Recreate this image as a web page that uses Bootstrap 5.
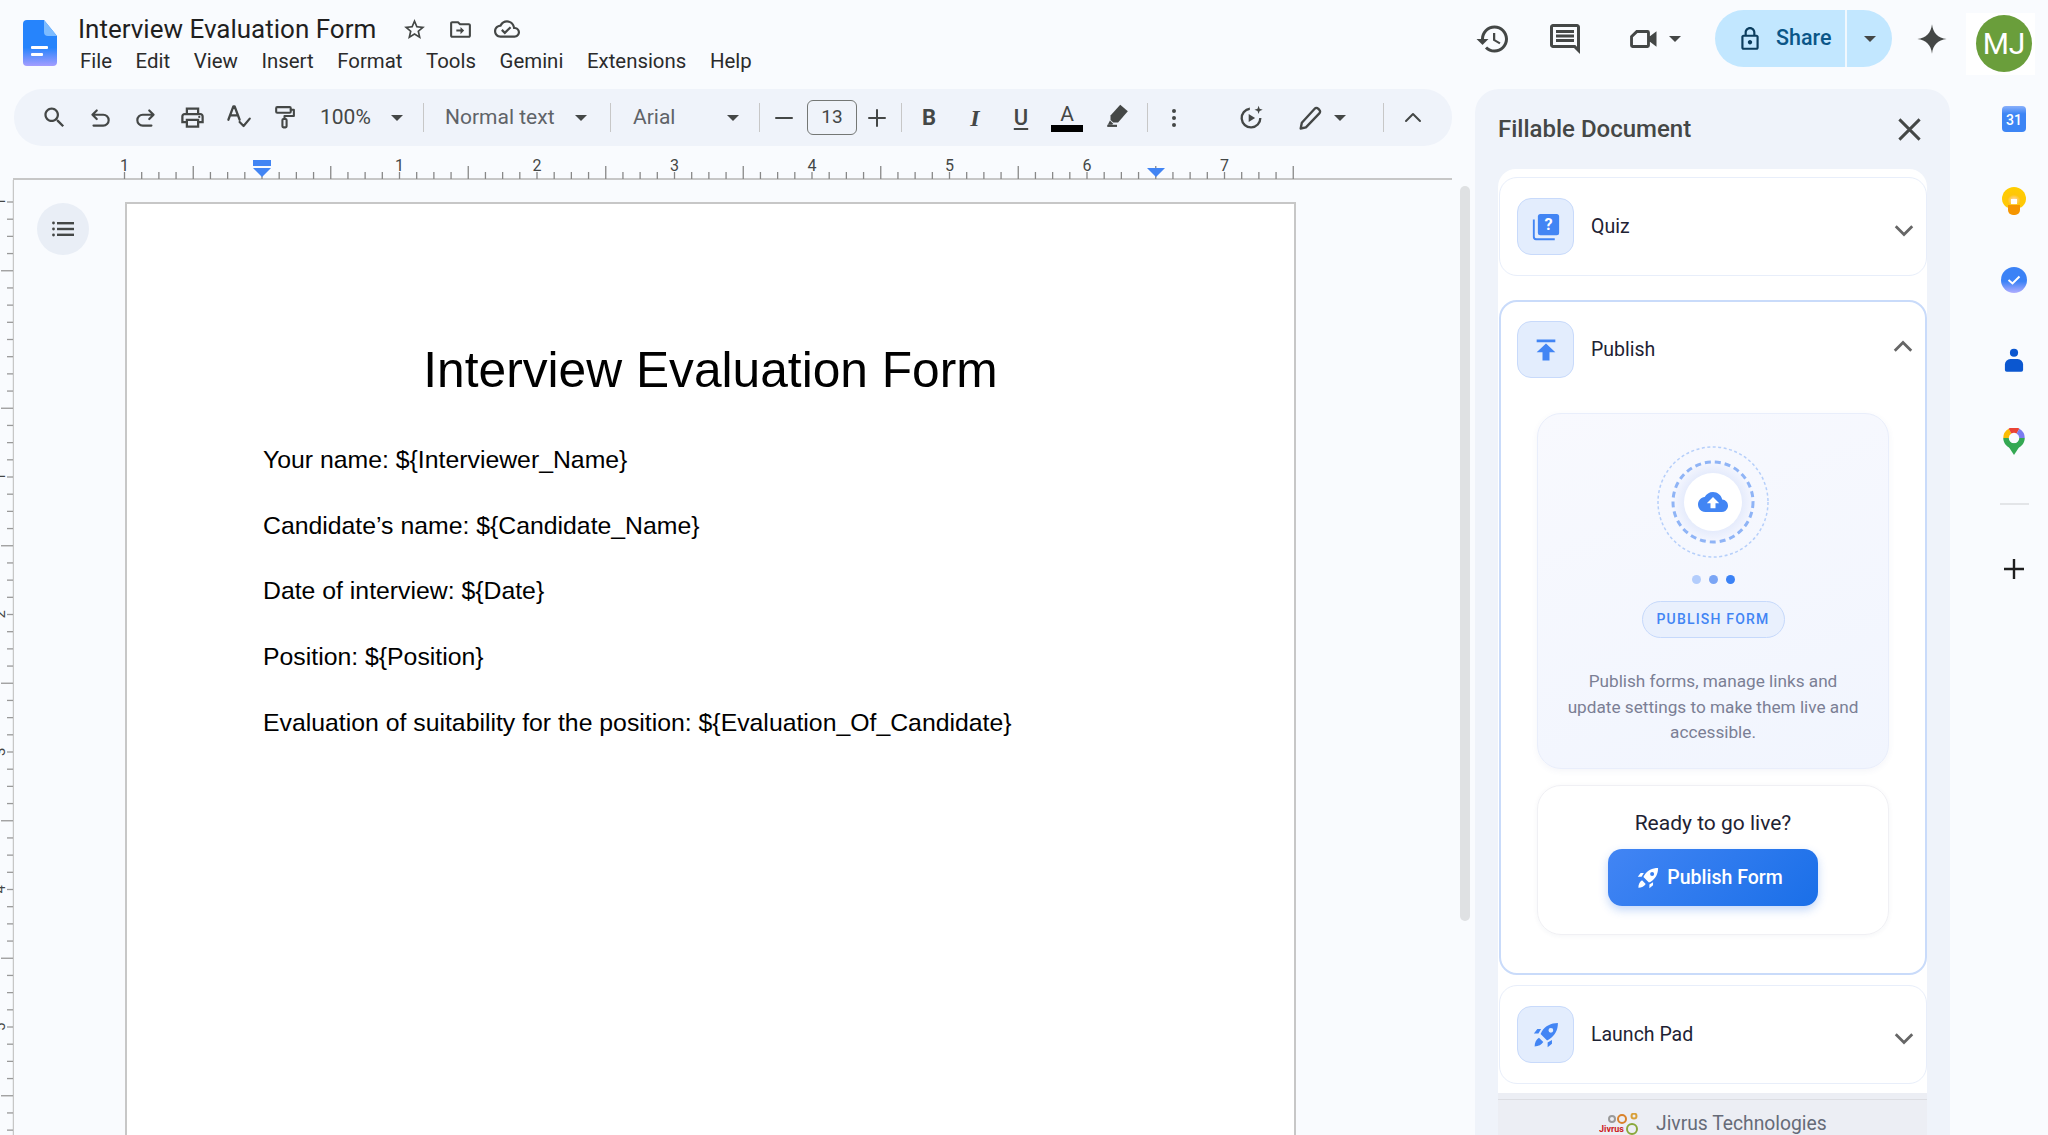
<!DOCTYPE html>
<html lang="en">
<head>
<meta charset="UTF-8">
<title>Interview Evaluation Form</title>
<link href="https://cdn.jsdelivr.net/npm/bootstrap@5.3.0/dist/css/bootstrap.min.css" rel="stylesheet">
<style>
    html, body { height: 100%; }
    body { background: #f9fbfe; overflow: hidden; font-family: Roboto, "Liberation Sans", sans-serif; color: #1f1f1f; }
    svg { display: block; flex: none; }
    .ic { fill: #444746; }
    .ics { fill: none; stroke: #444746; stroke-width: 2; stroke-linecap: round; stroke-linejoin: round; }

    /* header */
    .top-bar { height: 89px; flex: none; }
    .doc-logo { margin: 20px 21px 0 23px; }
    .title-row { margin-top: 14px; }
    .doc-title { font-size: 26px; line-height: 30px; }
    .title-icons { gap: 21px; margin-left: 26px; }
    .menu-row { gap: 23.6px; font-size: 20.4px; line-height: 26px; color: #2b2b2b; margin-left: 2px; margin-top: 4px; }
    .top-actions { margin-left: auto; padding-top: 10px; }
    .act-icon { width: 72px; height: 57px; }
    .act-video { width: 88px; padding-left: 24px; gap: 8px; }
    .share-group { height: 57px; width: 177px; margin-left: 26px; margin-right: 3px; background: #c2e7ff; border-radius: 29px; color: #0b5688; }
    .share-main { width: 132px; border-right: 2px solid #f1f8fe; gap: 13px; padding-left: 22px; font-size: 21.5px; font-weight: 500; }
    .share-caret { width: 45px; }
    .gem-wrap { width: 74px; height: 57px; margin-right: -3px; }
    .avatar-box { width: 69px; height: 62px; margin-top: 3px; margin-right: 13px; background: #fff; }
    .avatar { width: 56px; height: 57px; background: #6a9e3b; color: #fff; font-size: 30px; margin-top: 2px; margin-left: 10px; }

    /* toolbar */
    .left-col { width: 1475px; flex: none; }
    .tool-bar { margin-left: 14px; width: 1438px; height: 57px; flex: none; background: #eff3fa; border-radius: 28px; padding-left: 17px; color: #444746; font-size: 21px; }
    .tl { width: 46px; height: 100%; }
    .tsep { width: 1px; height: 29px; background: #c7c7c7; flex: none; }
    .caret-t { width: 0; height: 0; border-left: 6px solid transparent; border-right: 6px solid transparent; border-top: 6px solid #444746; }
    .sel-zoom { width: 111px; padding: 0 15px 0 13px; margin-right: 5px; color: #444746; }
    .sel-style { width: 186px; padding: 0 23px 0 21px; color: #5f6368; }
    .sel-font { width: 148px; padding: 0 20px 0 22px; color: #5f6368; }
    .t-minus { width: 47px; }
    .size-box { width: 50px; height: 35px; flex: none; border: 1.5px solid #747775; border-radius: 6px; font-size: 19px; }
    .t-plus { width: 40px; margin-right: 4px; }
    .t-b { margin-left: 4px; font-weight: 700; font-size: 22px; }
    .t-i { font-family: "Liberation Serif", serif; font-style: italic; font-weight: 700; font-size: 24px; }
    .t-u { font-size: 22px; font-weight: 500; text-decoration: underline; text-underline-offset: 3px; }
    .t-a { flex-direction: column; font-size: 21px; line-height: 22px; }
    .color-bar { width: 32px; height: 7px; background: #000; }
    .t-hl { margin-left: 4px; margin-right: 7px; padding-bottom: 6px; }
    .t-dots { width: 52px; }
    .t-play { margin-left: 28px; }
    .t-pen { margin-left: 13px; }
    .t-caret { width: 14px; margin-right: 36px; }
    .t-up { width: 58px; }

    /* rulers and page */
    .h-ruler { height: 34px; flex: none; }
    .work-area { min-height: 0; }
    .outline-col { width: 111px; flex: none; }
    .outline-btn { width: 52px; height: 52px; margin: 23px 0 0 23px; background: #e9eef6; }
    .doc-page { width: 1171px; flex: none; margin-top: 22px; background: #fff; border: 2px solid #c7c7c7; border-bottom: 0; padding: 0 135px; font-family: "Liberation Sans", Arial, sans-serif; color: #000; }
    .doc-head { font-size: 49.7px; font-weight: 400; text-align: center; line-height: 60px; margin: 136px 0 45px; }
    .doc-line { font-size: 24.8px; line-height: 30px; margin: 0 0 35.7px 1px; white-space: nowrap; }
    .fake-scroll { width: 10px; height: 735px; margin: 6px 0 0 164px; background: #dfe1e3; border-radius: 5px; flex: none; }

    /* side panel */
    .side-panel { width: 475px; flex: none; background: #eff3fa; border-radius: 24px 24px 0 0; padding: 0 23px; }
    .panel-title { height: 80px; padding-right: 4px; color: #444746; font-size: 24px; font-weight: 500; }
    .panel-list { background: #fff; border-radius: 18px 18px 0 0; padding: 8px 0 9px 1px; }
    .fd-card { border: 1px solid #e8eefa; border-radius: 18px; box-shadow: none; }
    .fd-card.open { border: 2px solid #c9dbfa; margin-top: 24px; margin-bottom: 10px; }
    .fd-head { padding: 20px 18px 20px 17px; gap: 17px; font-size: 19.5px; font-weight: 400; color: #1e2233; }
    .open .fd-head { padding: 19px 18px 0 16px; }
    .fd-icon { width: 57px; height: 57px; background: #e3edfd; border: 1.5px solid #c8dafb; border-radius: 14px; }
    .chev-dn { margin-left: auto; margin-top: 7px; margin-right: -7px; }
    .chev-up { margin-left: auto; margin-top: -5px; margin-right: -7px; }
    .promo-box { width: 352px; height: 356px; margin: 35px 0 0 36px; padding-top: 32px; background: linear-gradient(160deg, #f8f9fe, #f1f5fe); border: 1px solid #e9eefb; border-radius: 24px; box-shadow: 0 2px 6px rgba(70, 90, 160, .06); }
    .step-dots { gap: 8px; margin-top: 17px; }
    .step-dots span { width: 9px; height: 9px; }
    .dot-a { background: #b3cdfc; }
    .dot-b { background: #7aa5f5; }
    .dot-c { background: #3b82f6; }
    .pill-form { width: 143px; height: 37px; margin-top: 17px; background: #e9f0fd; border: 1.5px solid #c6d9fb; color: #4285f4; font-size: 14px; font-weight: 500; letter-spacing: 1.2px; }
    .promo-text { font-size: 17.2px; line-height: 25.5px; color: #7b7f95; margin: 31px 0 0; white-space: nowrap; }
    .ready-box { width: 352px; height: 150px; margin: 16px 0 38px 36px; padding-top: 23px; border: 1px solid #f0f0f4; border-radius: 24px; box-shadow: 0 1px 5px rgba(40, 50, 90, .05); }
    .ready-text { font-size: 21px; line-height: 28px; color: #1e2233; }
    .pub-btn { width: 210px; height: 57px; margin-top: 12px; gap: 8px; padding: 0 6px 0 0; border: 0; border-radius: 14px; background: linear-gradient(135deg, #4285f4, #1a6fe8); color: #fff; font-size: 19.5px; font-weight: 500; box-shadow: 0 4px 10px rgba(40, 110, 230, .28); }
    .brand-foot { flex: 1; background: #eceef4; padding-top: 6px; overflow: hidden; }
    .brand-line { height: 1px; background: #dcdde2; }
    .brand-row { gap: 17px; margin-top: 12px; font-size: 19.3px; line-height: 24px; color: #666b78; margin-left: 101px; }
    .jiv-logo { margin-top: 1px; }

    /* right rail */
    .right-rail { flex: 1; padding: 17px 0 0 30px; }
    .rail-slot { height: 80.5px; }
    .rail-line { width: 29px; height: 2px; background: #e3e5e8; margin-top: -6px; }
    .rail-add { margin-top: 52px; }
</style>
</head>
<body class="d-flex flex-column">

<!-- Header -->
<header class="top-bar d-flex">
    <svg class="doc-logo" width="34" height="46" viewBox="0 0 34 46">
        <defs><linearGradient id="docGrad" x1="0" y1="0" x2="0" y2="1"><stop offset=".6" stop-color="#2684fc"/><stop offset="1" stop-color="#a49dff"/></linearGradient></defs>
        <path d="M4 0H21L34 16V42a4 4 0 0 1-4 4H4a4 4 0 0 1-4-4V4a4 4 0 0 1 4-4z" fill="url(#docGrad)"/>
        <path d="M21 0L34 16H25a4 4 0 0 1-4-4z" fill="#7dbcff"/>
        <rect x="8" y="26" width="17" height="3" rx="1" fill="#fff"/>
        <rect x="8" y="33" width="12" height="3" rx="1" fill="#fff"/>
    </svg>
    <div>
        <div class="title-row d-flex align-items-center">
            <div class="doc-title">Interview Evaluation Form</div>
            <div class="title-icons d-flex align-items-center">
                <svg class="ic" width="25" height="25" viewBox="0 0 24 24"><path d="M22 9.24l-7.19-.62L12 2 9.19 8.63 2 9.24l5.46 4.73L5.82 21 12 17.27 18.18 21l-1.63-7.03L22 9.24zM12 15.4l-3.76 2.27 1-4.28-3.32-2.88 4.38-.38L12 6.1l1.71 4.04 4.38.38-3.32 2.88 1 4.28L12 15.4z"/></svg>
                <svg class="ic" width="25" height="25" viewBox="0 0 24 24"><path d="M20 6h-8l-2-2H4c-1.1 0-2 .9-2 2v12c0 1.1.9 2 2 2h16c1.1 0 2-.9 2-2V8c0-1.1-.9-2-2-2zm0 12H4V6h5.17l2 2H20v10z"/><path d="M12 9.5l3.5 3.5-3.5 3.5V14H8v-2h4z"/></svg>
                <svg class="ic" width="26" height="26" viewBox="0 0 24 24"><path d="M19.35 10.04C18.67 6.59 15.64 4 12 4 9.11 4 6.6 5.64 5.35 8.04 2.34 8.36 0 10.91 0 14c0 3.31 2.69 6 6 6h13c2.76 0 5-2.24 5-5 0-2.64-2.05-4.78-4.65-4.96zM19 18H6c-2.21 0-4-1.79-4-4 0-2.05 1.53-3.76 3.56-3.97l1.07-.11.5-.95C8.08 7.14 9.94 6 12 6c2.62 0 4.88 1.86 5.39 4.43l.3 1.5 1.53.11c1.56.1 2.78 1.41 2.78 2.96 0 1.65-1.35 3-3 3zm-9-3.82l-2.09-2.09L6.5 13.5 10 17l6.01-6.01-1.41-1.41z"/></svg>
            </div>
        </div>
        <div class="menu-row d-flex">
            <span>File</span><span>Edit</span><span>View</span><span>Insert</span><span>Format</span><span>Tools</span><span>Gemini</span><span>Extensions</span><span>Help</span>
        </div>
    </div>
    <div class="top-actions d-flex">
        <div class="act-icon d-flex align-items-center justify-content-center">
            <svg class="ic" width="36" height="36" viewBox="0 0 24 24"><path d="M13 3c-4.97 0-9 4.03-9 9H1l3.89 3.89.07.14L9 12H6c0-3.87 3.13-7 7-7s7 3.13 7 7-3.13 7-7 7c-1.93 0-3.68-.79-4.94-2.06l-1.42 1.42C8.27 19.99 10.51 21 13 21c4.97 0 9-4.03 9-9s-4.03-9-9-9zm-1 5v5l4.28 2.54.72-1.21-3.5-2.08V8H12z"/></svg>
        </div>
        <div class="act-icon d-flex align-items-center justify-content-center">
            <svg class="ic" width="36" height="36" viewBox="0 0 24 24"><path d="M21.99 4c0-1.1-.89-2-1.99-2H4c-1.1 0-2 .9-2 2v12c0 1.1.9 2 2 2h14l4 4-.01-18zM20 4v13.17L18.83 16H4V4h16zM6 12h12v2H6zm0-3h12v2H6zm0-3h12v2H6z"/></svg>
        </div>
        <div class="act-icon act-video d-flex align-items-center">
            <svg class="ic" width="36" height="36" viewBox="0 0 24 24"><path d="M7.500 6H15a1.600 1.600 0 0 1 1.600 1.600v2.600L21 6.800v10.400l-4.400-3.400v2.600A1.600 1.600 0 0 1 15 18H5a1.600 1.600 0 0 1-1.600-1.600V10zM8.300 8L5.300 10.900V16H14.700V8z"/></svg>
            <span class="caret-t"></span>
        </div>
        <div class="share-group d-flex">
            <div class="share-main d-flex align-items-center">
                <svg width="26" height="28" viewBox="0 0 24 24" fill="#0b3d5e"><path d="M18 8h-1V6c0-2.760-2.240-5-5-5S7 3.240 7 6v2H6c-1.100 0-2 .9-2 2v10c0 1.100.9 2 2 2h12c1.100 0 2-.9 2-2V10c0-1.100-.9-2-2-2zM9 6c0-1.660 1.340-3 3-3s3 1.340 3 3v2H9V6zm9 14H6V10h12v10zm-6-3c1.100 0 2-.9 2-2s-.9-2-2-2-2 .9-2 2 .9 2 2 2z"/></svg>
                <span>Share</span>
            </div>
            <div class="share-caret d-flex align-items-center justify-content-center"><span class="caret-t"></span></div>
        </div>
        <div class="gem-wrap d-flex align-items-center justify-content-center">
            <svg class="ic" width="32" height="32" viewBox="0 0 24 24"><path d="M12 1C12.700 7.600 16.400 11.300 23 12 16.400 12.700 12.700 16.400 12 23 11.300 16.400 7.600 12.700 1 12 7.600 11.300 11.300 7.600 12 1Z"/></svg>
        </div>
        <div class="avatar-box">
            <div class="avatar rounded-circle d-flex align-items-center justify-content-center">MJ</div>
        </div>
    </div>
</header>

<div class="d-flex flex-grow-1 work-area">
    <div class="left-col d-flex flex-column">

        <!-- Toolbar -->
        <div class="tool-bar d-flex align-items-center">
            <div class="tl d-flex align-items-center justify-content-center"><svg class="ic" width="27" height="27" viewBox="0 0 24 24"><path d="M15.500 14h-.79l-.28-.27C15.410 12.590 16 11.110 16 9.500 16 5.910 13.090 3 9.500 3S3 5.910 3 9.500 5.910 16 9.500 16c1.610 0 3.090-.59 4.230-1.570l.27.280v.790l5 4.990L20.490 19l-4.990-5zm-6 0C7.010 14 5 11.990 5 9.500S7.010 5 9.500 5 14 7.010 14 9.500 11.990 14 9.500 14z"/></svg></div>
            <div class="tl d-flex align-items-center justify-content-center"><svg class="ics" width="26" height="26" viewBox="0 0 24 24" stroke-width="1.900"><path d="M9 5L5 9l4 4M5 9h10a5 5 0 0 1 0 10H6"/></svg></div>
            <div class="tl d-flex align-items-center justify-content-center"><svg class="ics" width="26" height="26" viewBox="0 0 24 24" stroke-width="1.900"><path d="M15 5l4 4-4 4M19 9H9a5 5 0 0 0 0 10h8"/></svg></div>
            <div class="tl d-flex align-items-center justify-content-center"><svg class="ic" width="27" height="27" viewBox="0 0 24 24"><path d="M19 8h-1V3H6v5H5c-1.660 0-3 1.340-3 3v6h4v4h12v-4h4v-6c0-1.660-1.340-3-3-3zM8 5h8v3H8V5zm8 12v2H8v-4h8v2zm2-2v-2H6v2H4v-4c0-.55.45-1 1-1h14c.55 0 1 .45 1 1v4h-2z"/><circle cx="18" cy="11.500" r="1"/></svg></div>
            <div class="tl d-flex align-items-center justify-content-center"><svg class="ics" width="27" height="29" viewBox="0 0 24 24" stroke-width="1.700"><path d="M3 14L7.500 2h1L13 14M4.500 10h7M13 16l3.500 3.500L22 13"/></svg></div>
            <div class="tl d-flex align-items-center justify-content-center"><svg class="ics" width="25" height="29" viewBox="0 0 24 24" stroke-width="1.900"><rect x="4" y="2" width="14" height="5.500" rx="1"/><path d="M18 4.500h3v6h-9v3"/><rect x="10" y="13.500" width="4" height="8" rx="1"/></svg></div>
            <div class="sel-zoom d-flex align-items-center justify-content-between"><span>100%</span><span class="caret-t"></span></div>
            <div class="tsep"></div>
            <div class="sel-style d-flex align-items-center justify-content-between"><span>Normal text</span><span class="caret-t"></span></div>
            <div class="tsep"></div>
            <div class="sel-font d-flex align-items-center justify-content-between"><span>Arial</span><span class="caret-t"></span></div>
            <div class="tsep"></div>
            <div class="tl t-minus d-flex align-items-center justify-content-center"><svg class="ics" width="24" height="24" viewBox="0 0 24 24"><path d="M4 12h16"/></svg></div>
            <div class="size-box d-flex align-items-center justify-content-center">13</div>
            <div class="tl t-plus d-flex align-items-center justify-content-center"><svg class="ics" width="24" height="24" viewBox="0 0 24 24"><path d="M4 12h16M12 4v16"/></svg></div>
            <div class="tsep"></div>
            <div class="tl t-b d-flex align-items-center justify-content-center">B</div>
            <div class="tl t-i d-flex align-items-center justify-content-center">I</div>
            <div class="tl t-u d-flex align-items-center justify-content-center">U</div>
            <div class="tl t-a d-flex align-items-center justify-content-center"><span>A</span><span class="color-bar"></span></div>
            <div class="tl t-hl d-flex align-items-center justify-content-center"><svg class="ic" width="26" height="26" viewBox="0 0 24 24"><path d="M15 2.500L22 8.500l-9 10.500H8.500L6 16.500V12.500z"/><rect x="3" y="21" width="9" height="2"/><path d="M5.500 17l3 3-1 1H3.500z"/></svg></div>
            <div class="tsep"></div>
            <div class="tl t-dots d-flex align-items-center justify-content-center"><svg class="ic" width="24" height="24" viewBox="0 0 24 24"><circle cx="12" cy="5" r="2"/><circle cx="12" cy="12" r="2"/><circle cx="12" cy="19" r="2"/></svg></div>
            <div class="tl t-play d-flex align-items-center justify-content-center"><svg class="ic" width="28" height="28" viewBox="0 0 24 24"><path d="M11 3.100A9 9 0 1 0 21 12h-2a7 7 0 1 1-8-6.900z"/><path d="M10 8.500l5.500 3.500-5.500 3.500z"/><path d="M18.500 1.500l.9 2.600 2.600.9-2.600.9-.9 2.600-.9-2.600-2.600-.9 2.600-.9z"/></svg></div>
            <div class="tl t-pen d-flex align-items-center justify-content-center"><svg class="ics" width="28" height="28" viewBox="0 0 24 24" stroke-width="1.800"><path d="M4 21l1-5L16 4a2 2 0 0 1 3 0l1 1a2 2 0 0 1 0 3L8.500 20z"/></svg></div>
            <div class="tl t-caret d-flex align-items-center justify-content-center"><span class="caret-t"></span></div>
            <div class="tsep"></div>
            <div class="tl t-up d-flex align-items-center justify-content-center"><svg class="ics" width="24" height="24" viewBox="0 0 24 24"><path d="M5 15l7-7 7 7"/></svg></div>
        </div>

        <!-- Top ruler -->
        <svg class="h-ruler" id="topRuler" width="1452" height="34" viewBox="0 146 1452 34"></svg>

        <!-- Page area -->
        <div class="d-flex flex-grow-1 work-area">
            <svg id="sideRuler" width="14" height="955" viewBox="0 180 14 955"></svg>
            <div class="outline-col">
                <div class="outline-btn rounded-circle d-flex align-items-center justify-content-center">
                    <svg width="24" height="24" viewBox="0 0 24 24" fill="#444746"><circle cx="2.500" cy="6" r="1.400"/><circle cx="2.500" cy="12" r="1.400"/><circle cx="2.500" cy="18" r="1.400"/><rect x="6" y="5" width="17" height="2.400"/><rect x="6" y="10.800" width="17" height="2.400"/><rect x="6" y="16.600" width="17" height="2.400"/></svg>
                </div>
            </div>
            <div class="doc-page">
                <h1 class="doc-head">Interview Evaluation Form</h1>
                <p class="doc-line">Your name: ${Interviewer_Name}</p>
                <p class="doc-line">Candidate’s name: ${Candidate_Name}</p>
                <p class="doc-line">Date of interview: ${Date}</p>
                <p class="doc-line">Position: ${Position}</p>
                <p class="doc-line">Evaluation of suitability for the position: ${Evaluation_Of_Candidate}</p>
            </div>
            <div class="fake-scroll"></div>
        </div>
    </div>

    <!-- Side panel -->
    <aside class="side-panel d-flex flex-column">
        <div class="panel-title d-flex align-items-center justify-content-between">
            <span>Fillable Document</span>
            <svg width="27" height="27" viewBox="0 0 24 24" fill="none" stroke="#444746" stroke-width="2.600"><path d="M3 3l18 18M21 3L3 21"/></svg>
        </div>
        <div class="panel-list">
            <div class="fd-card card">
                <div class="fd-head d-flex align-items-center">
                    <div class="fd-icon d-flex align-items-center justify-content-center">
                        <svg width="30" height="30" viewBox="0 0 24 24"><path d="M3 6H1.500v14A2.500 2.500 0 0 0 4 22.500h15V21H4.500A1.500 1.500 0 0 1 3 19.500z" fill="#4285f4"/><rect x="5.500" y="1.500" width="17" height="17" rx="2" fill="#4285f4"/><text x="14" y="14.500" text-anchor="middle" font-size="13" font-weight="700" fill="#fff" font-family="Roboto, sans-serif">?</text></svg>
                    </div>
                    <span>Quiz</span>
                    <svg class="chev-dn" width="22" height="22" viewBox="0 0 24 24" fill="none" stroke="#666" stroke-width="3"><path d="M3 8l9 9 9-9"/></svg>
                </div>
            </div>

            <div class="fd-card open card">
                <div class="fd-head d-flex align-items-center">
                    <div class="fd-icon d-flex align-items-center justify-content-center">
                        <svg width="28" height="28" viewBox="0 0 24 24" fill="#4285f4"><path d="M4 3v2.400h16V3zM4 14h5v7h6v-7h5l-8-7.500z"/></svg>
                    </div>
                    <span>Publish</span>
                    <svg class="chev-up" width="22" height="22" viewBox="0 0 24 24" fill="none" stroke="#666" stroke-width="3"><path d="M3 16l9-9 9 9"/></svg>
                </div>

                <div class="promo-box text-center d-flex flex-column align-items-center">
                    <svg width="112" height="112" viewBox="0 0 112 112">
                        <defs><radialGradient id="haloGrad"><stop offset=".6" stop-color="#dfe7fb"/><stop offset="1" stop-color="#f4f6fe"/></radialGradient></defs>
                        <circle cx="56" cy="56" r="55" fill="none" stroke="#b6cffa" stroke-width="1.500" stroke-dasharray="3 2.500"/>
                        <circle cx="56" cy="56" r="40" fill="url(#haloGrad)" stroke="#8fb4f6" stroke-width="3" stroke-dasharray="6 4"/>
                        <circle cx="56" cy="56" r="29" fill="#fff"/>
                        <svg x="41" y="41" width="30" height="30" viewBox="0 0 24 24"><path fill="#4285f4" d="M19.350 10.040C18.670 6.590 15.640 4 12 4 9.110 4 6.600 5.640 5.350 8.040 2.340 8.360 0 10.910 0 14c0 3.310 2.690 6 6 6h13c2.760 0 5-2.240 5-5 0-2.640-2.050-4.780-4.650-4.960zM14 13v4h-4v-4H7l5-5 5 5h-3z"/></svg>
                    </svg>
                    <div class="step-dots d-flex">
                        <span class="dot-a rounded-circle"></span><span class="dot-b rounded-circle"></span><span class="dot-c rounded-circle"></span>
                    </div>
                    <div class="pill-form rounded-pill d-flex align-items-center justify-content-center">PUBLISH FORM</div>
                    <p class="promo-text">Publish forms, manage links and<br>update settings to make them live and<br>accessible.</p>
                </div>

                <div class="ready-box text-center">
                    <div class="ready-text">Ready to go live?</div>
                    <button class="pub-btn btn d-inline-flex align-items-center justify-content-center">
                        <svg width="22" height="22" viewBox="0 0 24 24" fill="#fff"><path fill-rule="evenodd" d="M23 1c-6.500 0-11.500 2.600-15 8l-1 2 6 6 2-1c5.400-3.500 8-8.500 8-15zM16.500 5.500a2.200 2.200 0 1 1 0 4.400 2.200 2.200 0 0 1 0-4.400z"/><path d="M7.500 6.500H4L.8 10.500H5zM17.500 16.500V20l-4 3.200V19zM5.500 14.500L9.500 18.500C8 21 5 22.500 1.500 22.500 1.500 19 3 16 5.500 14.500z"/></svg>
                        <span>Publish Form</span>
                    </button>
                </div>
            </div>

            <div class="fd-card card">
                <div class="fd-head d-flex align-items-center">
                    <div class="fd-icon d-flex align-items-center justify-content-center">
                        <svg width="26" height="26" viewBox="0 0 24 24" fill="#4285f4"><path fill-rule="evenodd" d="M23 1c-6.500 0-11.500 2.600-15 8l-1 2 6 6 2-1c5.400-3.500 8-8.500 8-15zM16.500 5.500a2.200 2.200 0 1 1 0 4.400 2.200 2.200 0 0 1 0-4.400z"/><path d="M7.500 6.500H4L.8 10.500H5zM17.500 16.500V20l-4 3.200V19zM5.500 14.500L9.500 18.500C8 21 5 22.500 1.500 22.500 1.500 19 3 16 5.500 14.500z"/></svg>
                    </div>
                    <span>Launch Pad</span>
                    <svg class="chev-dn" width="22" height="22" viewBox="0 0 24 24" fill="none" stroke="#666" stroke-width="3"><path d="M3 8l9 9 9-9"/></svg>
                </div>
            </div>
        </div>
        <div class="brand-foot">
            <div class="brand-line"></div>
            <div class="brand-row d-flex">
                <svg class="jiv-logo" width="40" height="30" viewBox="0 0 40 30" fill="none" stroke-width="2"><circle cx="13" cy="6" r="3" stroke="#999"/><circle cx="23" cy="6" r="4" stroke="#d9822b"/><circle cx="35" cy="3" r="2.500" stroke="#d9a13b"/><circle cx="33" cy="16" r="5" stroke="#8aa83b"/><text x="0" y="19" font-size="9" font-weight="700" fill="#cc2222" stroke="none" font-family="Roboto, sans-serif">Jivrus</text></svg>
                <span>Jivrus Technologies</span>
            </div>
        </div>
    </aside>

    <!-- Right rail -->
    <div class="right-rail d-flex flex-column align-items-center">
        <div class="rail-slot">
            <svg width="24" height="26" viewBox="0 0 24 26"><defs><linearGradient id="calGrad" x1="0" y1="0" x2="0" y2="1"><stop offset="0" stop-color="#8ab0fb"/><stop offset=".3" stop-color="#3d85f5"/></linearGradient></defs><rect width="24" height="26" rx="4" fill="url(#calGrad)"/><text x="12" y="19" text-anchor="middle" font-size="14" font-weight="500" fill="#fff" font-family="Roboto, sans-serif">31</text></svg>
        </div>
        <div class="rail-slot">
            <svg width="24" height="28" viewBox="0 0 24 28"><defs><radialGradient id="keepGrad" cx=".5" cy=".65" r=".6"><stop offset="0" stop-color="#ffd6d0"/><stop offset=".45" stop-color="#ffc60a"/><stop offset="1" stop-color="#ffcd00"/></radialGradient></defs><path d="M12 0a12 12 0 0 1 12 12c0 4-2.300 6.500-5 8.500H5C2.300 18.500 0 16 0 12A12 12 0 0 1 12 0z" fill="url(#keepGrad)"/><rect x="9" y="12" width="6" height="5" fill="#fff"/><path d="M6 18h12v5a5 5 0 0 1-5 5h-2a5 5 0 0 1-5-5z" fill="#f59500"/></svg>
        </div>
        <div class="rail-slot">
            <svg width="26" height="26" viewBox="0 0 26 26"><defs><linearGradient id="taskGrad" x1="0" y1="0" x2="0" y2="1"><stop offset=".55" stop-color="#3b82f6"/><stop offset="1" stop-color="#b0adff"/></linearGradient></defs><circle cx="13" cy="13" r="13" fill="url(#taskGrad)"/><path d="M7.500 13l4 3.500 7-7" fill="none" stroke="#fff" stroke-width="2"/></svg>
        </div>
        <div class="rail-slot">
            <svg width="20" height="24" viewBox="0 0 22 26" fill="#0b57d0"><circle cx="11" cy="5" r="4.500"/><path d="M7 12h8a6 6 0 0 1 6 6v6a2 2 0 0 1-2 2H3a2 2 0 0 1-2-2v-6a6 6 0 0 1 6-6z"/></svg>
        </div>
        <div class="rail-slot">
            <svg width="22" height="27" viewBox="0 0 22 27" fill="none" stroke-width="5.500">
                <path d="M3.500 15.500L11 27l7.500-11.500z" fill="#34a853"/>
                <path d="M19 10A8 8 0 0 1 3 10" stroke="#34a853"/>
                <path d="M3 10A8 8 0 0 1 7 3.070" stroke="#fbbc04"/>
                <path d="M7 3.070A8 8 0 0 1 15 3.070" stroke="#ea4335"/>
                <path d="M15 3.070A8 8 0 0 1 19 10" stroke="#7b7cf0"/>
            </svg>
        </div>
        <div class="rail-line"></div>
        <svg class="rail-add" width="24" height="24" viewBox="0 0 24 24" stroke="#1f1f1f" stroke-width="2.400"><path d="M2 12h20M12 2v20"/></svg>
    </div>
</div>

<script>
    // top ruler: 1/8 inch ticks, zero at the left margin of the page
    const INCH = 137.5;
    const ZERO_X = 262;
    let topMarks = '<line x1="13" y1="179" x2="1452" y2="179" stroke="#c7c7c7" stroke-width="2"/>';
    for (let i = -8; i <= 83; i++) {
        const x = ZERO_X + i * INCH / 8;
        if (x > 1296) continue;
        const tall = ((i % 8) + 8) % 8 === 4 || i === 75;
        topMarks += `<line x1="${x}" y1="179" x2="${x}" y2="${tall ? 166 : 172}" stroke="#888" stroke-width="1.300"/>`;
        if (i % 8 === 0 && i !== 0) {
            topMarks += `<text x="${x}" y="171" text-anchor="middle" font-size="16" fill="#444746" font-family="Roboto, sans-serif">${Math.abs(i / 8)}</text>`;
        }
    }
    topMarks += '<rect x="253" y="160" width="18" height="6" fill="#4285f4"/><path d="M253 168h18l-9 9zM1147 168h18l-9 9z" fill="#4285f4"/>';
    document.getElementById('topRuler').innerHTML = topMarks;

    // side ruler: same scale, zero at the top of the page, digits run off the left edge
    let sideMarks = '<line x1="13.500" y1="180" x2="13.500" y2="1135" stroke="#c7c7c7" stroke-width="1.500"/>';
    for (let i = 0; i < 56; i++) {
        const y = 202 + i * INCH / 8;
        const major = i % 4 === 0 && i % 8 !== 0;
        sideMarks += `<line x1="${major ? 1 : 7}" y1="${y}" x2="13" y2="${y}" stroke="#999" stroke-width="1.300"/>`;
        if (i % 8 === 0 && i !== 8) {
            sideMarks += `<text transform="translate(5 ${y + 4}) rotate(-90)" font-size="15" fill="#444746" font-family="Roboto, sans-serif">${i === 0 ? 1 : i / 8 - 1}</text>`;
        }
    }
    document.getElementById('sideRuler').innerHTML = sideMarks;
</script>
<script src="https://cdn.jsdelivr.net/npm/bootstrap@5.3.0/dist/js/bootstrap.bundle.min.js"></script>
</body>
</html>
